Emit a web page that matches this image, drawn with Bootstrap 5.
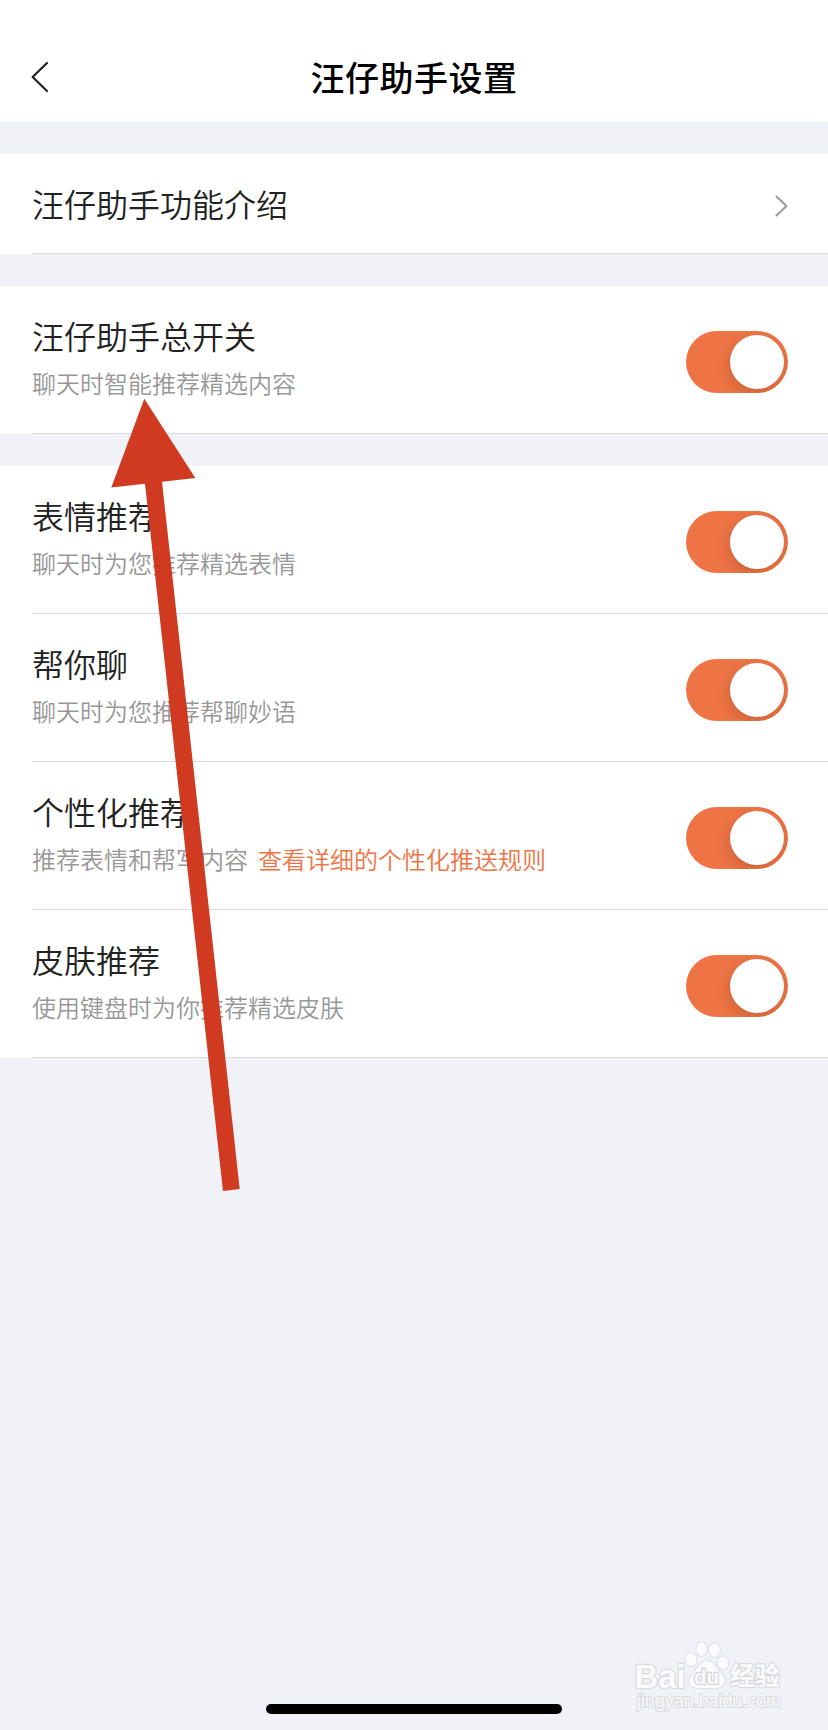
<!DOCTYPE html>
<html lang="zh-CN">
<head>
<meta charset="utf-8">
<meta name="viewport" content="width=device-width, initial-scale=1">
<title>汪仔助手设置</title>
<link rel="stylesheet" href="https://cdn.jsdelivr.net/npm/bootstrap@5.3.0/dist/css/bootstrap.min.css">
<style>
  body { background: #f1f2f7; font-family: "Noto Sans CJK SC", sans-serif; color: #222; }
  .screen { width: 828px; height: 1730px; }
  .topbar { height: 122px; padding: 36px 32px 0; }
  .topbar h1 { font-size: 34px; line-height: 50px; letter-spacing: .5px; font-weight: 500; color: #000; }
  .topbar svg { left: 29px; top: 60px; }
  .groups { gap: 32px; padding-top: 32px; }
  .entry { height: 148px; margin-left: 32px; padding: 25px 40px 0 0; border-bottom: 1px solid #dbdbdf; }
  .entry-link { height: 100px; padding-top: 0; padding-bottom: 1px; }
  .entry-link svg { margin-top: 5px; }
  .entry-title { font-size: 32px; line-height: 48px; font-weight: 350; }
  .entry-note { font-size: 24px; line-height: 36px; margin-top: 6px; font-weight: 350; color: #979797; }
  .entry-note a { color: #ee7445; margin-left: 10px; }
  .toggle { width: 102px; height: 62px; margin-top: 20px; padding: 4px; background: #ee7445; overflow: hidden; }
  .knob { width: 54px; height: 54px; background: #fff; box-shadow: -1px 5px 14px rgba(60,20,0,.18); }
  .home-bar { width: 296px; height: 10px; bottom: 16px; background: #000; }
</style>
</head>
<body>
<div class="screen position-relative overflow-hidden">
  <header class="topbar bg-white text-center position-relative">
    <svg class="position-absolute" width="22" height="34" fill="none" stroke="#222" stroke-width="2.2" stroke-linecap="round" stroke-linejoin="round"><path d="M18 3 3.600 17 18 31"/></svg>
    <h1 class="mb-0 pt-3" id="page-title">汪仔助手设置</h1>
  </header>

  <main class="groups d-flex flex-column">
    <section class="bg-white">
      <div class="entry entry-link d-flex justify-content-between align-items-center">
        <div class="entry-title">汪仔助手功能介绍</div>
        <svg width="13" height="22" fill="none" stroke="#999" stroke-width="2" stroke-linecap="round" stroke-linejoin="round"><path d="M1.5 1.5 11.5 11 1.5 20.5"/></svg>
      </div>
    </section>

    <section class="bg-white">
      <div class="entry d-flex justify-content-between">
        <div><div class="entry-title">汪仔助手总开关</div><div class="entry-note">聊天时智能推荐精选内容</div></div>
        <div class="toggle rounded-pill d-flex justify-content-end"><div class="knob rounded-circle"></div></div>
      </div>
    </section>

    <section class="bg-white">
      <div class="entry d-flex justify-content-between">
        <div><div class="entry-title">表情推荐</div><div class="entry-note">聊天时为您推荐精选表情</div></div>
        <div class="toggle rounded-pill d-flex justify-content-end"><div class="knob rounded-circle"></div></div>
      </div>
      <div class="entry d-flex justify-content-between">
        <div><div class="entry-title">帮你聊</div><div class="entry-note">聊天时为您推荐帮聊妙语</div></div>
        <div class="toggle rounded-pill d-flex justify-content-end"><div class="knob rounded-circle"></div></div>
      </div>
      <div class="entry d-flex justify-content-between">
        <div><div class="entry-title">个性化推荐</div><div class="entry-note d-flex"><span>推荐表情和帮写内容</span><a href="#" class="text-decoration-none">查看详细的个性化推送规则</a></div></div>
        <div class="toggle rounded-pill d-flex justify-content-end"><div class="knob rounded-circle"></div></div>
      </div>
      <div class="entry d-flex justify-content-between">
        <div><div class="entry-title">皮肤推荐</div><div class="entry-note">使用键盘时为你推荐精选皮肤</div></div>
        <div class="toggle rounded-pill d-flex justify-content-end"><div class="knob rounded-circle"></div></div>
      </div>
    </section>
  </main>

  <!-- Pointer arrow and watermark laid over the page -->
  <svg class="position-absolute top-0 start-0 pe-none" width="828" height="1730" viewBox="0 0 828 1730">
    <path fill="#d03a20" d="M144.3 398.8 195.3 478 162 481.8 239.7 1189 223 1191 145 483.8 111.3 487.5Z"/>
    <g fill="#fbfbfd" stroke="#d9dadd" stroke-width="1.6" paint-order="stroke" stroke-linejoin="round">
      <ellipse cx="691" cy="1659.500" rx="5.500" ry="7"/>
      <ellipse cx="701.500" cy="1649" rx="5.200" ry="7.200"/>
      <ellipse cx="714.500" cy="1650" rx="5.500" ry="7"/>
      <ellipse cx="723" cy="1663" rx="5.300" ry="6.700"/>
      <path d="M707 1661c7 0 9 6 13 11 5 5 6 8 4 12-3 5-9 4-17 4s-14 1-17-4c-2-4-1-7 4-12 4-5 6-11 13-11Z"/>
      <text x="634.500" y="1687.500" font-family="Liberation Sans" font-weight="700" font-size="34" textLength="51" lengthAdjust="spacingAndGlyphs" stroke-width="2.400">Bai</text>
      <text x="694" y="1684" font-family="Liberation Sans" font-weight="700" font-size="20" textLength="25" lengthAdjust="spacingAndGlyphs" stroke-width="2.400" stroke="#d2d3d7">du</text>
      <text x="730" y="1685" font-family="Noto Sans CJK SC" font-weight="700" font-size="25" stroke-width="2.400">经验</text>
      <text x="637" y="1707" font-family="Liberation Sans" font-size="18" textLength="144" lengthAdjust="spacingAndGlyphs" stroke-width="2">jingyan.baidu.com</text>
    </g>
  </svg>

  <div class="home-bar position-absolute start-50 translate-middle-x rounded-pill"></div>
</div>
<script src="https://cdn.jsdelivr.net/npm/bootstrap@5.3.0/dist/js/bootstrap.bundle.min.js"></script>
</body>
</html>
